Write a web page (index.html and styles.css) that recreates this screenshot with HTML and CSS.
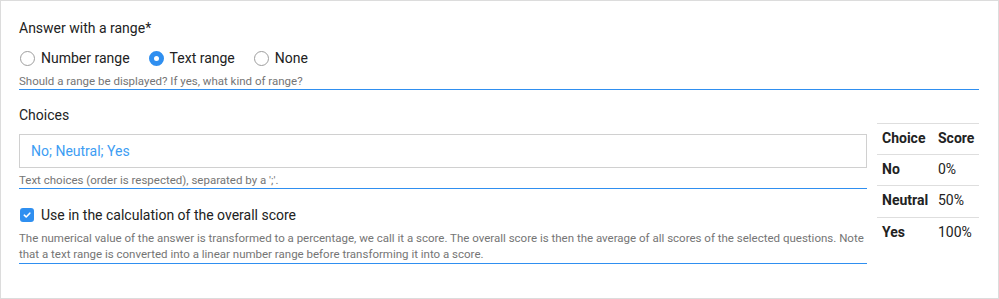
FILE: index.html
```html
<!DOCTYPE html>
<html>
<head>
<meta charset="utf-8">
<link rel="stylesheet" href="styles.css">
</head>
<body>
<div class="card">
  <div class="field field-range">
    <div class="label">Answer with a range*</div>
    <div class="radios">
      <label class="radio"><span class="dot"></span>Number range</label>
      <label class="radio checked"><span class="dot"></span>Text range</label>
      <label class="radio"><span class="dot"></span>None</label>
    </div>
    <div class="hint">Should a range be displayed? If yes, what kind of range?</div>
  </div>
  <div class="row">
    <div class="left">
      <div class="field field-choices">
        <div class="label">Choices</div>
        <div class="input">No; Neutral; Yes</div>
        <div class="hint">Text choices (order is respected), separated by a ';'.</div>
      </div>
      <div class="field field-score">
        <label class="check">
          <span class="box"><svg width="10" height="10" viewBox="0 0 10 10"><path d="M2.3 5.2 L4.2 7 L7.8 3.2" fill="none" stroke="#fff" stroke-width="1.6" stroke-linecap="round" stroke-linejoin="round"/></svg></span>
          Use in the calculation of the overall score
        </label>
        <div class="hint desc">The numerical value of the answer is transformed to a percentage, we call it a score. The overall score is then the average of all scores of the selected questions. Note that a text range is converted into a linear number range before transforming it into a score.</div>
      </div>
    </div>
    <div class="table">
      <div class="tr th"><span class="c1">Choice</span><span class="c2">Score</span></div>
      <div class="tr"><span class="c1">No</span><span class="c2">0%</span></div>
      <div class="tr"><span class="c1">Neutral</span><span class="c2">50%</span></div>
      <div class="tr"><span class="c1">Yes</span><span class="c2">100%</span></div>
    </div>
  </div>
</div>
</body>
</html>
```

FILE: styles.css
```css
* { box-sizing: border-box; }
html, body { margin: 0; padding: 0; background: #fff; }
body {
  font-family: Roboto, "Liberation Sans", sans-serif;
  color: #222;
  width: 999px;
  height: 299px;
}
.card {
  width: 999px;
  height: 299px;
  border: 1px solid #dcdcdc;
  padding: 17px 19px 0 18px;
}
.label {
  font-size: 14px;
  line-height: 20px;
}
.radios {
  display: flex;
  margin-top: 10px;
  font-size: 14px;
  line-height: 20px;
}
.radio {
  display: flex;
  align-items: center;
  margin-right: 18px;
}
.dot {
  width: 15px;
  height: 15px;
  border: 1px solid #9e9e9e;
  border-radius: 50%;
  margin: 0 6px 0 1px;
  flex: none;
}
.radio.checked .dot {
  border: 5px solid #2f8ff0;
  background: #fff;
}
.hint {
  font-size: 11.5px;
  line-height: 15px;
  color: #757575;
  border-bottom: 1px solid #2f8ff0;
  margin-top: 6px;
}
.row {
  display: flex;
  align-items: flex-start;
  gap: 10px;
  margin-top: 15px;
}
.left {
  flex: 1;
}
.input {
  margin-top: 9px;
  height: 34px;
  border: 1px solid #d0d0d0;
  padding: 0 11px;
  font-size: 14px;
  line-height: 32px;
  color: #3d9df3;
}
.field-choices .hint { margin-top: 5px; }
.field-score { margin-top: 16px; }
.check {
  display: flex;
  align-items: center;
  font-size: 14px;
  line-height: 20px;
}
.box {
  width: 14px;
  height: 14px;
  border-radius: 3px;
  background: #2f8ff0;
  margin: 0 7px 0 1px;
  display: flex;
  align-items: center;
  justify-content: center;
  flex: none;
}
.hint.desc {
  margin-top: 5px;
  line-height: 16px;
  padding-bottom: 1px;
}
.table {
  width: 102px;
  margin-top: 18px;
  font-size: 14px;
}
.tr {
  display: flex;
  border-top: 1px solid #dedede;
  padding: 6px 0 8px 5px;
  line-height: 16px;
}
.tr:nth-child(3) { padding-bottom: 9px; }
.th { font-weight: bold; }
.c1 { width: 56px; font-weight: bold; }
.c2 { flex: 1; }
```
